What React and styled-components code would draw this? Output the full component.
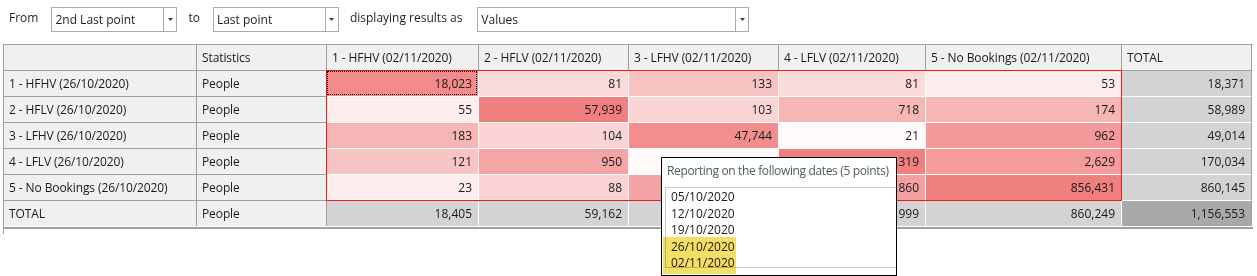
import React from "react";
import styled, { createGlobalStyle } from "styled-components";

const Global = createGlobalStyle`
  html, body { margin: 0; padding: 0; background: #fff; }
  body { font-family: "Open Sans", "Noto Sans", sans-serif; font-size: 12px; color: #1e1e1e; }
`;

const Page = styled.div`
  position: relative;
  width: 1257px;
  height: 276px;
  overflow: hidden;
`;

const Toolbar = styled.div`
  display: flex;
  align-items: center;
  height: 25px;
  padding: 7px 0 0 9px;
`;

const Label = styled.span`
  padding-bottom: 4px;
  margin-right: ${(p) => p.$gap}px;
  white-space: nowrap;
`;

const Select = styled.div`
  box-sizing: border-box;
  display: flex;
  width: ${(p) => p.$w}px;
  height: 25px;
  border: 1px solid #ababab;
  background: #fff;
  margin-right: ${(p) => p.$gap}px;
`;

const SelectValue = styled.div`
  flex: 1;
  padding-left: 3px;
  line-height: 23px;
  white-space: nowrap;
`;

const SelectButton = styled.div`
  width: 12px;
  border-left: 1px solid #ababab;
  display: flex;
  align-items: center;
  justify-content: center;
`;

const TableWrap = styled.div`
  margin: 12px 0 0 3px;
  width: 1249px;
  border-left: 1px solid #a0a0a0;
  padding-bottom: 5px;
`;

const Table = styled.div`
  position: relative;
  display: grid;
  grid-template-columns: 193px 130px 152px 150px 150px 147px 196px 130px;
  grid-auto-rows: 26px;
  border-top: 1px solid #a0a0a0;
  border-bottom: 2px solid #a0a0a0;
`;

const kinds = {
  head: { bg: "#f0f0f0", r: "#a0a0a0", b: "#a0a0a0" },
  label: { bg: "#f0f0f0", r: "#a0a0a0", b: "#a0a0a0" },
  data: { bg: "#fff", r: "#ffffff", b: "#ffffff" },
  tcol: { bg: "#d3d3d3", r: "#a0a0a0", b: "#ffffff" },
  trow: { bg: "#d3d3d3", r: "#ffffff", b: "transparent" },
  tlabel: { bg: "#f0f0f0", r: "#a0a0a0", b: "transparent" },
  grand: { bg: "#a9a9a9", r: "#a0a0a0", b: "transparent" },
};

const Cell = styled.div`
  position: relative;
  box-sizing: border-box;
  height: ${(p) => (p.$last ? 25 : 26)}px;
  background: ${(p) => p.$bg || kinds[p.$kind].bg};
  border-right: 1px solid ${(p) => kinds[p.$kind].r};
  border-bottom: ${(p) => (p.$last ? "0" : `1px solid ${kinds[p.$kind].b}`)};
  padding: 0 ${(p) => (p.$num ? 6 : 5)}px 0 5px;
  line-height: 25px;
  text-align: ${(p) => (p.$num ? "right" : "left")};
  letter-spacing: ${(p) => (p.$num ? "0" : "-0.1px")};
  white-space: nowrap;
  overflow: hidden;
  color: #1a1a1a;
  ${(p) =>
    p.$focus &&
    `&::after { content: ""; position: absolute; left: 0; top: 0; right: 1px; bottom: 1px; border: 1px dotted #000; }`}
`;

const Selection = styled.div`
  position: absolute;
  left: 322px;
  top: 25px;
  width: 796px;
  height: 131px;
  box-sizing: border-box;
  border: 1px solid #ec1c1c;
  pointer-events: none;
`;

const Tooltip = styled.div`
  position: absolute;
  left: 661px;
  top: 157px;
  width: 236px;
  height: 119px;
  box-sizing: border-box;
  border: 1px solid #000;
  background: #fff;
  padding: 5px 0 0 3px;
  overflow: hidden;
`;

const TipTitle = styled.div`
  padding-left: 2px;
  line-height: 16px;
  color: #4c5c5c;
  white-space: nowrap;
  letter-spacing: -0.35px;
`;

const DateList = styled.div`
  margin-top: 8px;
  width: 260px;
  height: 81px;
  box-sizing: border-box;
  border: 1px solid #c9c9c9;
  overflow: hidden;
`;

const DateItem = styled.div`
  padding-left: 5px;
  line-height: 16.6px;
  color: #1a1a1a;
  &:first-child { margin-top: 1px; }
`;

const Highlight = styled.div`
  position: absolute;
  left: 1px;
  top: 79px;
  width: 73px;
  height: 37px;
  background: #f3df66;
  mix-blend-mode: multiply;
  pointer-events: none;
`;

const Arrow = () => (
  <svg width="5" height="3" viewBox="0 0 5 3">
    <polygon points="0,0 5,0 2.5,3" fill="#3c3c3c" />
  </svg>
);

const Dropdown = ({ w, gap, value }) => (
  <Select $w={w} $gap={gap}>
    <SelectValue>{value}</SelectValue>
    <SelectButton>
      <Arrow />
    </SelectButton>
  </Select>
);

const headers = [
  "",
  "Statistics",
  "1 - HFHV (02/11/2020)",
  "2 - HFLV (02/11/2020)",
  "3 - LFHV (02/11/2020)",
  "4 - LFLV (02/11/2020)",
  "5 - No Bookings (02/11/2020)",
  "TOTAL",
];

const rows = [
  {
    label: "1 - HFHV (26/10/2020)",
    vals: [["18,023", "#f28c8c"], ["81", "#fbdada"], ["133", "#f8c4c4"], ["81", "#fbdada"], ["53", "#fdecec"]],
    total: "18,371",
  },
  {
    label: "2 - HFLV (26/10/2020)",
    vals: [["55", "#fdeded"], ["57,939", "#f08080"], ["103", "#fad4d4"], ["718", "#f6b6b6"], ["174", "#f6b6b6"]],
    total: "58,989",
  },
  {
    label: "3 - LFHV (26/10/2020)",
    vals: [["183", "#f6b6b6"], ["104", "#fad4d4"], ["47,744", "#f28e8e"], ["21", "#fffafa"], ["962", "#f39a9a"]],
    total: "49,014",
  },
  {
    label: "4 - LFLV (26/10/2020)",
    vals: [["121", "#f8c4c4"], ["950", "#f4a6a6"], ["15", "#fffafa"], ["166,319", "#f08080"], ["2,629", "#f49c9c"]],
    total: "170,034",
  },
  {
    label: "5 - No Bookings (26/10/2020)",
    vals: [["23", "#fdeded"], ["88", "#fad4d4"], ["743", "#f4a4a4"], ["2,860", "#f4a0a0"], ["856,431", "#f08080"]],
    total: "860,145",
  },
];

const totals = ["18,405", "59,162", "48,738", "169,999", "860,249"];
const dates = ["05/10/2020", "12/10/2020", "19/10/2020", "26/10/2020", "02/11/2020"];

export default function App() {
  return (
    <Page>
      <Global />
      <Toolbar>
        <Label $gap={13}>From</Label>
        <Dropdown w={126} gap={11} value="2nd Last point" />
        <Label $gap={13}>to</Label>
        <Dropdown w={126} gap={11} value="Last point" />
        <Label $gap={15}>displaying results as</Label>
        <Dropdown w={272} gap={0} value="Values" />
      </Toolbar>
      <TableWrap>
        <Table>
          {headers.map((h, i) => (
            <Cell key={"h" + i} $kind="head">
              {h}
            </Cell>
          ))}
          {rows.map((r, ri) => (
            <React.Fragment key={ri}>
              <Cell $kind="label">{r.label}</Cell>
              <Cell $kind="label">People</Cell>
              {r.vals.map(([v, c], ci) => (
                <Cell key={ci} $kind="data" $num $bg={c} $focus={ri === 0 && ci === 0}>
                  {v}
                </Cell>
              ))}
              <Cell $kind="tcol" $num>
                {r.total}
              </Cell>
            </React.Fragment>
          ))}
          <Cell $kind="tlabel" $last>
            TOTAL
          </Cell>
          <Cell $kind="tlabel" $last>
            People
          </Cell>
          {totals.map((t, i) => (
            <Cell key={"t" + i} $kind="trow" $num $last>
              {t}
            </Cell>
          ))}
          <Cell $kind="grand" $num $last>
            1,156,553
          </Cell>
          <Selection />
        </Table>
      </TableWrap>
      <Tooltip>
        <TipTitle>Reporting on the following dates (5 points)</TipTitle>
        <DateList>
          {dates.map((d) => (
            <DateItem key={d}>{d}</DateItem>
          ))}
        </DateList>
        <Highlight />
      </Tooltip>
    </Page>
  );
}
